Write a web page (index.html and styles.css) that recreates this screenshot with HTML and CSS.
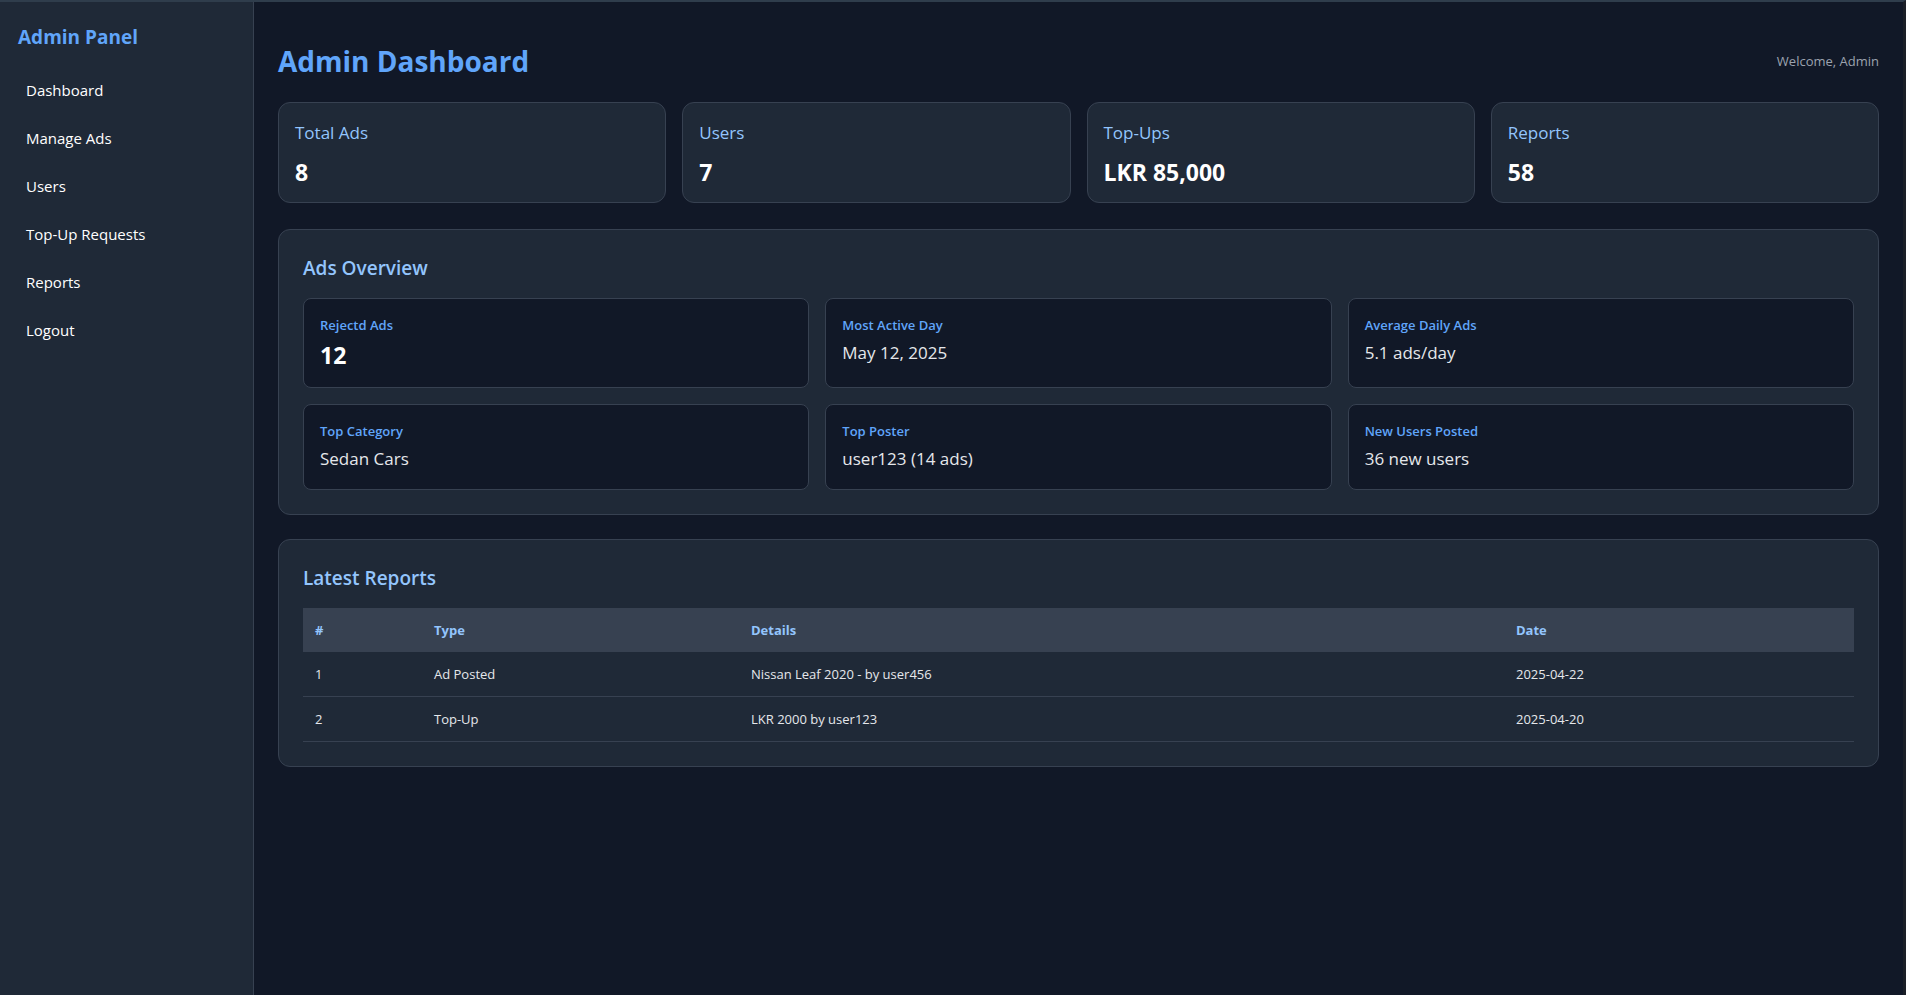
FILE: index.html
```html
<!DOCTYPE html>
<html lang="en">
<head>
<meta charset="utf-8">
<title>Admin Dashboard</title>
<link rel="stylesheet" href="styles.css">
</head>
<body>
<div class="app">
  <aside class="sidebar">
    <h2 class="brand">Admin Panel</h2>
    <nav class="nav">
      <a class="nav-item" href="#">Dashboard</a>
      <a class="nav-item" href="#">Manage Ads</a>
      <a class="nav-item" href="#">Users</a>
      <a class="nav-item" href="#">Top-Up Requests</a>
      <a class="nav-item" href="#">Reports</a>
      <a class="nav-item" href="#">Logout</a>
    </nav>
  </aside>
  <main class="main">
    <header class="header">
      <h1 class="title">Admin Dashboard</h1>
      <span class="welcome">Welcome, Admin</span>
    </header>

    <section class="stats">
      <div class="stat-card"><div class="stat-label">Total Ads</div><div class="stat-value">8</div></div>
      <div class="stat-card"><div class="stat-label">Users</div><div class="stat-value">7</div></div>
      <div class="stat-card"><div class="stat-label">Top-Ups</div><div class="stat-value">LKR 85,000</div></div>
      <div class="stat-card"><div class="stat-label">Reports</div><div class="stat-value">58</div></div>
    </section>

    <section class="panel">
      <h3 class="panel-title">Ads Overview</h3>
      <div class="overview-grid">
        <div class="mini-card"><div class="mini-label">Rejectd Ads</div><div class="mini-value big">12</div></div>
        <div class="mini-card"><div class="mini-label">Most Active Day</div><div class="mini-value">May 12, 2025</div></div>
        <div class="mini-card"><div class="mini-label">Average Daily Ads</div><div class="mini-value">5.1 ads/day</div></div>
        <div class="mini-card"><div class="mini-label">Top Category</div><div class="mini-value">Sedan Cars</div></div>
        <div class="mini-card"><div class="mini-label">Top Poster</div><div class="mini-value">user123 (14 ads)</div></div>
        <div class="mini-card"><div class="mini-label">New Users Posted</div><div class="mini-value">36 new users</div></div>
      </div>
    </section>

    <section class="panel">
      <h3 class="panel-title">Latest Reports</h3>
      <table class="reports">
        <thead>
          <tr><th class="c-num">#</th><th class="c-type">Type</th><th class="c-details">Details</th><th>Date</th></tr>
        </thead>
        <tbody>
          <tr><td>1</td><td>Ad Posted</td><td>Nissan Leaf 2020 - by user456</td><td>2025-04-22</td></tr>
          <tr><td>2</td><td>Top-Up</td><td>LKR 2000 by user123</td><td>2025-04-20</td></tr>
        </tbody>
      </table>
    </section>
  </main>
</div>
</body>
</html>
```

FILE: styles.css
```css
* { box-sizing: border-box; }
html, body { margin: 0; padding: 0; height: 100%; }
body {
  background: #111827;
  font-family: "Open Sans", "Noto Sans", "Liberation Sans", sans-serif;
  color: #e5e7eb;
}
.app {
  display: flex;
  min-height: 100vh;
  border-top: 2px solid #2f3d4c;
  border-right: 3px solid #1b1f27;
}
.sidebar {
  width: 254px;
  flex-shrink: 0;
  background: #1f2937;
  border-right: 1px solid #374151;
  padding: 21px 18px;
}
.brand {
  margin: 0 0 15px 0;
  font-size: 19px;
  line-height: 28px;
  font-weight: 700;
  color: #60a5fa;
}
.nav { display: flex; flex-direction: column; }
.nav-item {
  display: block;
  padding: 12px 8px;
  font-size: 15px;
  line-height: 24px;
  color: #ffffff;
  text-decoration: none;
}
.main {
  flex: 1;
  padding: 41px 24px 24px 24px;
  min-width: 0;
}
.header {
  display: flex;
  justify-content: space-between;
  align-items: center;
  margin-bottom: 23px;
}
.title {
  margin: 0;
  font-size: 28px;
  line-height: 36px;
  font-weight: 700;
  color: #60a5fa;
}
.welcome {
  font-size: 13px;
  color: #9ca3af;
}
.stats {
  display: grid;
  grid-template-columns: repeat(4, 1fr);
  gap: 16px;
  margin-bottom: 26px;
}
.stat-card {
  background: #1f2937;
  border: 1px solid #374151;
  border-radius: 12px;
  padding: 16px 16px;
}
.stat-label {
  font-size: 17px;
  line-height: 28px;
  font-weight: 400;
  color: #93c5fd;
}
.stat-value {
  margin-top: 11px;
  font-size: 23px;
  line-height: 28px;
  font-weight: 700;
  color: #ffffff;
}
.panel {
  background: #1f2937;
  border: 1px solid #374151;
  border-radius: 12px;
  padding: 24px 24px;
  margin-bottom: 24px;
}
.panel-title {
  margin: 0 0 16px 0;
  font-size: 19px;
  line-height: 28px;
  font-weight: 600;
  color: #93c5fd;
}
.overview-grid {
  display: grid;
  grid-template-columns: repeat(3, 1fr);
  gap: 16px;
}
.mini-card {
  background: #111827;
  border: 1px solid #374151;
  border-radius: 8px;
  padding: 16px 16px;
}
.mini-label {
  font-size: 13px;
  line-height: 20px;
  font-weight: 600;
  color: #60a5fa;
}
.mini-value {
  margin-top: 4px;
  font-size: 17px;
  line-height: 28px;
  color: #e5e7eb;
}
.mini-value.big {
  font-size: 23px;
  line-height: 32px;
  font-weight: 700;
  color: #ffffff;
}
.reports {
  width: 100%;
  border-collapse: collapse;
  font-size: 13px;
}
.reports th, .reports td {
  text-align: left;
  padding: 12px 12px;
  line-height: 20px;
}
.reports thead tr { background: #374151; }
.reports th {
  font-weight: 700;
  color: #93c5fd;
}
.reports td {
  color: #e5e7eb;
  border-bottom: 1px solid #374151;
}
.c-num { width: 119px; }
.c-type { width: 317px; }
.c-details { width: 765px; }
```
